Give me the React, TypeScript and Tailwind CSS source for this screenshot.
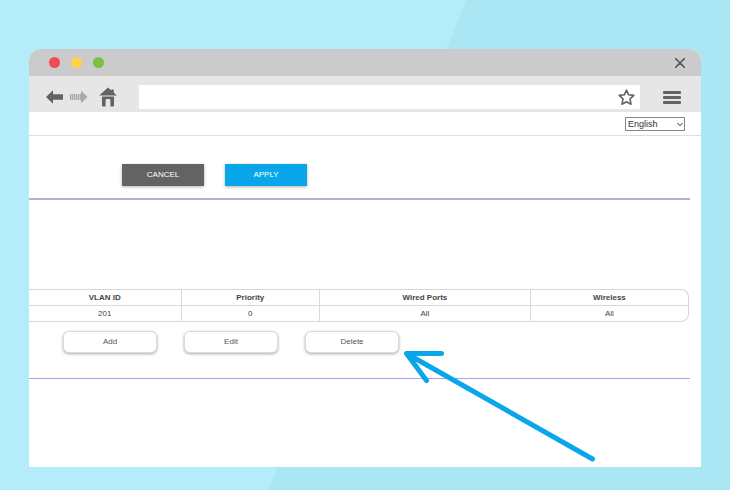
import React from "react";

type VlanRow = { id: string; priority: string; wired: string; wireless: string };

const rows: VlanRow[] = [{ id: "201", priority: "0", wired: "All", wireless: "All" }];

function TitleBar() {
  return (
    <div className="flex h-[27px] items-center justify-between bg-[#cbcbcb] pl-5 pr-4">
      <div className="flex gap-[11px]">
        <span className="size-[11px] rounded-full bg-[#f04b54]" />
        <span className="size-[11px] rounded-full bg-[#fed24b]" />
        <span className="size-[11px] rounded-full bg-[#7ac142]" />
      </div>
      <button type="button" aria-label="Close" className="text-[#58595b]">
        <svg width="10" height="10" viewBox="0 0 10 10" fill="none" stroke="currentColor" strokeWidth="1.5" strokeLinecap="round">
          <path d="M0.6 0.6L9.4 9.4M9.4 0.6L0.6 9.4" />
        </svg>
      </button>
    </div>
  );
}

function Toolbar() {
  return (
    <div className="flex h-9 items-center bg-[#e6e6e6] pl-[17px] pr-5 pt-[6px] text-[#636363]">
      <button type="button" aria-label="Back">
        <svg width="17" height="14" viewBox="0 0 17 14" fill="currentColor">
          <path d="M0 7L7 0.3V4.2H17V9.8H7V13.7Z" />
        </svg>
      </button>
      <button type="button" aria-label="Forward" className="ml-[7px] text-[#a9a9b0]">
        <svg width="18" height="14" viewBox="0 0 18 14" fill="currentColor">
          <path d="M0 4H1V10H0ZM2 4H3V10H2ZM4 4H5V10H4ZM6 4H7V10H6ZM8 4H9V10H8ZM10 4H11V0.5L17.6 7L11 13.5V10H10Z" />
          <path d="M0 4H11V10H0Z" opacity="0.45" />
        </svg>
      </button>
      <button type="button" aria-label="Home" className="ml-[11px]">
        <svg width="18" height="20" viewBox="0 0 18 20" fill="currentColor">
          <path d="M9 0.5L12.4 3.6V2.4H14.8V5.8L17.8 8.6H0.2Z" />
          <path d="M3 9.5H15V18.5Q15 19.5 14 19.5H11.4V13.2Q11.4 12 10.2 12H7.8Q6.6 12 6.6 13.2V19.5H4Q3 19.5 3 18.5Z" />
        </svg>
      </button>
      <div className="ml-[22px] flex h-6 flex-1 items-center bg-white pr-[5px]">
        <input type="text" aria-label="Address" className="h-full min-w-0 flex-1 px-2 text-xs outline-none" />
        <button type="button" aria-label="Bookmark">
          <svg width="17" height="17" viewBox="0 0 17 17" fill="none" stroke="currentColor" strokeWidth="1.6" strokeLinejoin="round">
            <path d="M8.5 1.2L10.6 5.8L15.8 6.4L12 9.9L13 15.2L8.5 12.8L4 15.2L5 9.9L1.2 6.4L6.4 5.8Z" />
          </svg>
        </button>
      </div>
      <button type="button" aria-label="Menu" className="ml-[23px] flex w-[18px] flex-col gap-[2px]">
        <span className="h-[3px] rounded-[1px] bg-[#636363]" />
        <span className="h-[3px] rounded-[1px] bg-[#636363]" />
        <span className="h-[3px] rounded-[1px] bg-[#636363]" />
      </button>
    </div>
  );
}

function LanguageBar() {
  return (
    <div className="flex h-6 items-end justify-end border-b border-[#dedede] pb-1 pr-4">
      <div className="relative flex">
        <select aria-label="Language" className="h-[14px] w-[60px] appearance-none border border-[#85858f] bg-white pl-[2px] text-[9px] leading-[12px] text-[#333]">
          <option>English</option>
        </select>
        <svg className="pointer-events-none absolute right-[2px] top-[5px]" width="6" height="5" viewBox="0 0 6 5" fill="none" stroke="#333" strokeWidth="1">
          <path d="M0.5 1L3 3.7L5.5 1" />
        </svg>
      </div>
    </div>
  );
}

function VlanTable() {
  const head = "border-l border-[#dadade] font-bold first:border-l-0";
  const cell = "border-l border-t border-[#dadade] first:border-l-0";
  return (
    <div className="mr-3 overflow-hidden rounded-r-lg border-y border-r border-[#d6d6d8]">
      <table className="w-full table-fixed border-separate border-spacing-0 text-center text-[8px] leading-[15px] text-[#444]">
        <colgroup>
          <col className="w-[23%]" />
          <col className="w-[21%]" />
          <col className="w-[32%]" />
          <col className="w-[24%]" />
        </colgroup>
        <thead>
          <tr>
            <th className={head}>VLAN ID</th>
            <th className={head}>Priority</th>
            <th className={head}>Wired Ports</th>
            <th className={head}>Wireless</th>
          </tr>
        </thead>
        <tbody>
          {rows.map((row) => (
            <tr key={row.id}>
              <td className={cell}>{row.id}</td>
              <td className={cell}>{row.priority}</td>
              <td className={cell}>{row.wired}</td>
              <td className={cell}>{row.wireless}</td>
            </tr>
          ))}
        </tbody>
      </table>
    </div>
  );
}

function RowButton({ label }: { label: string }) {
  return (
    <button
      type="button"
      className="h-[22px] w-[94px] rounded-md border border-[#dcdcdc] bg-white text-[8px] leading-[12px] text-[#555] shadow-[0_1px_3px_rgba(0,0,0,0.35)]"
    >
      {label}
    </button>
  );
}

export default function App() {
  return (
    <div className="flex min-h-screen flex-col bg-[linear-gradient(112deg,#b4edfa_calc(50%+2px),#abe6f4_calc(50%+2px))] px-[29px] pb-[23px] pt-[49px] font-['Liberation_Sans',Arial,sans-serif]">
      <div className="flex flex-1 flex-col overflow-hidden rounded-t-xl bg-white">
        <TitleBar />
        <Toolbar />
        <LanguageBar />
        <main className="relative flex-1">
          <div className="mr-[11px] flex gap-[21px] border-b-2 border-[#b3aede] pb-3 pl-[93px] pt-7">
            <button type="button" className="h-[22px] w-[82px] bg-[#636363] text-[8px] leading-[12px] text-white shadow-[0_1px_3px_rgba(0,0,0,0.3)]">
              CANCEL
            </button>
            <button type="button" className="h-[22px] w-[82px] bg-[#09a7ea] text-[8px] leading-[12px] text-white shadow-[0_1px_3px_rgba(0,0,0,0.3)]">
              APPLY
            </button>
          </div>
          <div className="pt-[89px]">
            <VlanTable />
          </div>
          <div className="mr-[11px] flex gap-[27px] border-b border-[#a9a1f5] pb-[25px] pl-[34px] pt-[9px]">
            <RowButton label="Add" />
            <RowButton label="Edit" />
            <RowButton label="Delete" />
          </div>
          <svg
            className="pointer-events-none absolute left-[374px] top-[213px]"
            width="194"
            height="114"
            viewBox="0 0 194 114"
            fill="none"
            stroke="#09a7ea"
            strokeWidth="5"
            strokeLinecap="round"
            strokeLinejoin="round"
          >
            <path d="M189.5 110L3.5 4.5M38.5 4.5L3.5 4.5L23.5 31.5" />
          </svg>
        </main>
      </div>
    </div>
  );
}
